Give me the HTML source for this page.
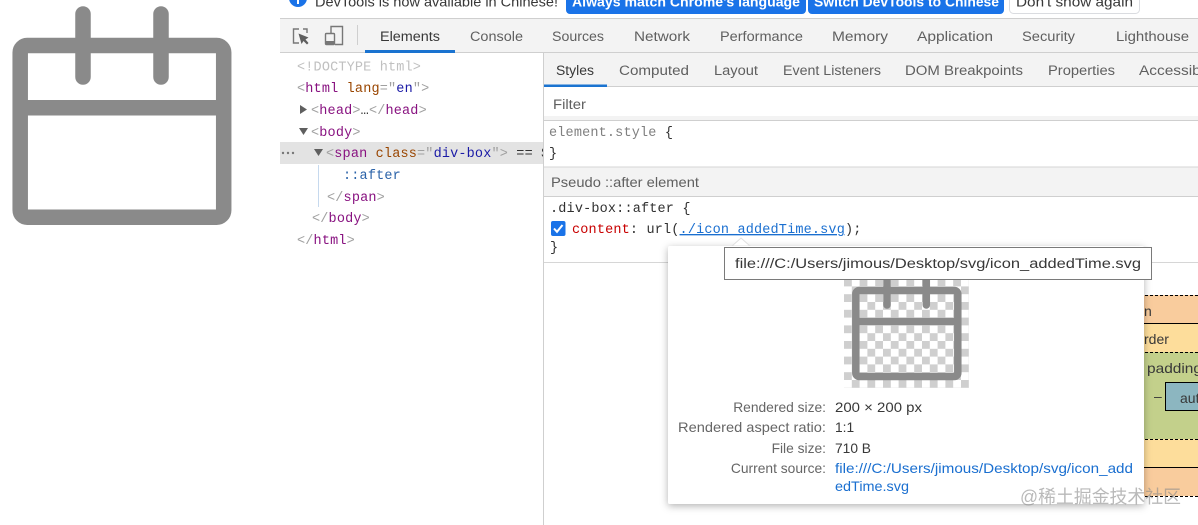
<!DOCTYPE html>
<html lang="en">
<head>
<meta charset="utf-8">
<title>DevTools</title>
<style>
html,body{margin:0;padding:0;background:#fff;width:1198px;height:525px;overflow:hidden}
svg{display:block;position:absolute;left:0;top:0}
text{font-family:"Liberation Sans",sans-serif;white-space:pre}
.t{font-size:14.2px;fill:#5f5f5f}
.u{font-size:14.2px;fill:#383838}
.m{font-family:"Liberation Mono",monospace;font-size:13.5px;letter-spacing:.17px;fill:#a3a3a3}
.g{fill:#a0a0a0}.n{fill:#881280}.a{fill:#994500}.v{fill:#1a1aa6}.d{fill:#303030}
.l{font-size:13.8px;fill:#666;text-anchor:end}
.r{font-size:13.8px;fill:#383838}
.b{font-size:13.8px;fill:#1a6fd0}
</style>
</head>
<body>
<svg width="1198" height="525" viewBox="0 0 1198 525" xmlns="http://www.w3.org/2000/svg">
<defs>
<pattern id="ch" x="844" y="263" width="15.6" height="15.6" patternUnits="userSpaceOnUse">
<rect width="15.6" height="15.6" fill="#fff"/>
<rect width="7.8" height="7.8" fill="#cfcfcf"/>
<rect x="7.8" y="7.8" width="7.8" height="7.8" fill="#cfcfcf"/>
</pattern>
<clipPath id="leftp"><rect x="280" y="53" width="263" height="200"/></clipPath>
<filter id="sh" x="-10%" y="-10%" width="120%" height="120%"><feDropShadow dx="0" dy="2" stdDeviation="4" flood-color="#000" flood-opacity=".3"/></filter>
</defs>

<!-- big left icon -->
<g fill="none" stroke="#8a8a8a" stroke-width="15.5">
<rect x="20.2" y="45.5" width="203.5" height="171.7" rx="7"/>
<path d="M20 107.7H224"/>
<path stroke-linecap="round" d="M83 14V77M161 14V77"/>
</g>

<!-- infobar -->
<circle cx="298" cy="-2" r="9" fill="#1a73e8"/>
<rect x="297" y="-1" width="2" height="5" fill="#fff"/>
<text x="315" y="6.5" class="u" textLength="243" lengthAdjust="spacingAndGlyphs">DevTools is now available in Chinese!</text>
<rect x="566" y="-6" width="240" height="20" rx="4" fill="#1a73e8"/>
<text x="572" y="6.5" style="font-size:14px;font-weight:700;fill:#fff" textLength="228" lengthAdjust="spacingAndGlyphs">Always match Chrome's language</text>
<rect x="808" y="-6" width="196" height="20" rx="4" fill="#1a73e8"/>
<text x="814" y="6.5" style="font-size:14px;font-weight:700;fill:#fff" textLength="185" lengthAdjust="spacingAndGlyphs">Switch DevTools to Chinese</text>
<rect x="1009.5" y="-6" width="130" height="19.5" rx="4" fill="#fff" stroke="#dadce0"/>
<text x="1016" y="6.5" class="u" textLength="117" lengthAdjust="spacingAndGlyphs">Don't show again</text>

<!-- main toolbar -->
<rect x="280" y="18" width="918" height="35" fill="#f3f3f3"/>
<rect x="280" y="18" width="918" height="1" fill="#cfcfcf"/>
<rect x="280" y="52" width="918" height="1" fill="#cfcfcf"/>
<g fill="none" stroke="#777" stroke-width="1.4">
<path d="M299 29H293.5V43H299M303 29H307V33"/>
</g>
<path d="M298.5 33.5L308.5 37.5L305.5 39.5L308.5 43L307 44.5L303.5 41L301.5 44Z" fill="#5f5f5f"/>
<g fill="none" stroke="#777" stroke-width="1.4">
<path d="M331 34V26.5H342.5V44.5H335"/>
<rect x="325.5" y="33.5" width="9" height="11" rx="1"/>
</g>
<rect x="325" y="41" width="10" height="3.5" fill="#777"/>
<rect x="357" y="25" width="1" height="20" fill="#cfcfcf"/>
<text x="380" y="41" class="u" textLength="60" lengthAdjust="spacingAndGlyphs">Elements</text>
<rect x="365" y="50" width="90" height="3" fill="#1a73d0"/>
<text x="470" y="41" class="t" textLength="53" lengthAdjust="spacingAndGlyphs">Console</text>
<text x="552" y="41" class="t" textLength="52" lengthAdjust="spacingAndGlyphs">Sources</text>
<text x="634" y="41" class="t" textLength="56" lengthAdjust="spacingAndGlyphs">Network</text>
<text x="720" y="41" class="t" textLength="83" lengthAdjust="spacingAndGlyphs">Performance</text>
<text x="832" y="41" class="t" textLength="56" lengthAdjust="spacingAndGlyphs">Memory</text>
<text x="917" y="41" class="t" textLength="76" lengthAdjust="spacingAndGlyphs">Application</text>
<text x="1022" y="41" class="t" textLength="53" lengthAdjust="spacingAndGlyphs">Security</text>
<text x="1116" y="41" class="t" textLength="73" lengthAdjust="spacingAndGlyphs">Lighthouse</text>

<!-- elements tree -->
<rect x="280" y="142" width="263" height="22" fill="#e3e3e3"/>
<g fill="#777"><circle cx="283" cy="153" r="1.2"/><circle cx="288" cy="153" r="1.2"/><circle cx="293" cy="153" r="1.2"/></g>
<rect x="318" y="165" width="1" height="42" fill="#c6d9ee"/>
<path d="M300 105L307 109.5L300 114Z" fill="#5f5f5f"/>
<path d="M299 128H308L303.5 135Z" fill="#5f5f5f"/>
<path d="M314 149H323L318.5 156Z" fill="#5f5f5f"/>
<text x="297" y="70.5" class="m" style="fill:#c0c0c0">&lt;!DOCTYPE html&gt;</text>
<text x="297" y="92" class="m"><tspan class="g">&lt;</tspan><tspan class="n">html</tspan> <tspan class="a">lang</tspan><tspan class="g">="</tspan><tspan class="v">en</tspan><tspan class="g">"&gt;</tspan></text>
<text x="311" y="114" class="m"><tspan class="g">&lt;</tspan><tspan class="n">head</tspan><tspan class="g">&gt;</tspan><tspan class="d">…</tspan><tspan class="g">&lt;/</tspan><tspan class="n">head</tspan><tspan class="g">&gt;</tspan></text>
<text x="311" y="136" class="m"><tspan class="g">&lt;</tspan><tspan class="n">body</tspan><tspan class="g">&gt;</tspan></text>
<text x="326" y="157" class="m" clip-path="url(#leftp)"><tspan class="g">&lt;</tspan><tspan class="n">span</tspan> <tspan class="a">class</tspan><tspan class="g">="</tspan><tspan class="v">div-box</tspan><tspan class="g">"&gt;</tspan> <tspan class="d">== $0</tspan></text>
<text x="343" y="179" class="m" style="fill:#2a62a8">::after</text>
<text x="327" y="201" class="m"><tspan class="g">&lt;/</tspan><tspan class="n">span</tspan><tspan class="g">&gt;</tspan></text>
<text x="312" y="222" class="m"><tspan class="g">&lt;/</tspan><tspan class="n">body</tspan><tspan class="g">&gt;</tspan></text>
<text x="297" y="244" class="m"><tspan class="g">&lt;/</tspan><tspan class="n">html</tspan><tspan class="g">&gt;</tspan></text>

<!-- divider -->
<rect x="543" y="53" width="1" height="472" fill="#cfcfcf"/>

<!-- sub tabs -->
<rect x="544" y="53" width="654" height="34" fill="#f3f3f3"/>
<rect x="544" y="86" width="654" height="1" fill="#cfcfcf"/>
<rect x="544" y="84.5" width="63" height="2.5" fill="#1a73d0"/>
<text x="556" y="75" class="u" textLength="38" lengthAdjust="spacingAndGlyphs">Styles</text>
<text x="619" y="75" class="t" textLength="70" lengthAdjust="spacingAndGlyphs">Computed</text>
<text x="714" y="75" class="t" textLength="44" lengthAdjust="spacingAndGlyphs">Layout</text>
<text x="783" y="75" class="t" textLength="98" lengthAdjust="spacingAndGlyphs">Event Listeners</text>
<text x="905" y="75" class="t" textLength="118" lengthAdjust="spacingAndGlyphs">DOM Breakpoints</text>
<text x="1048" y="75" class="t" textLength="67" lengthAdjust="spacingAndGlyphs">Properties</text>
<text x="1139" y="75" class="t" textLength="84" lengthAdjust="spacingAndGlyphs">Accessibility</text>

<!-- filter -->
<rect x="544" y="116" width="654" height="4" fill="#f3f3f3"/>
<rect x="544" y="120" width="654" height="1" fill="#cfcfcf"/>
<text x="553" y="109" class="t" textLength="33" lengthAdjust="spacingAndGlyphs">Filter</text>

<!-- styles -->
<text x="549" y="136" class="m" style="fill:#808080">element.style <tspan class="d">{</tspan></text>
<text x="549" y="157" class="m d">}</text>
<rect x="544" y="167" width="654" height="29" fill="#f3f3f3"/>
<rect x="544" y="166.5" width="654" height="1" fill="#d6d6d6"/>
<rect x="544" y="196" width="654" height="1" fill="#cfcfcf"/>
<text x="551" y="187" class="t" style="font-size:14px" textLength="148" lengthAdjust="spacingAndGlyphs">Pseudo ::after element</text>
<text x="550" y="212" class="m d">.div-box::after {</text>
<rect x="551" y="221" width="14.5" height="15" rx="2" fill="#1a73e8"/>
<path d="M554 228.5L557 231.8L562.5 225" fill="none" stroke="#fff" stroke-width="2"/>
<text x="572" y="233" class="m d"><tspan style="fill:#c80000">content</tspan>: url(<tspan style="fill:#1a6fd0;text-decoration:underline">./icon_addedTime.svg</tspan>);</text>
<text x="550" y="251" class="m d">}</text>
<rect x="544" y="262" width="654" height="1" fill="#d6d6d6"/>

<!-- box model -->
<rect x="1130" y="295" width="68" height="28" fill="#f9cc9d"/>
<rect x="1130" y="323" width="68" height="29" fill="#fddd9b"/>
<rect x="1130" y="352" width="68" height="87" fill="#c3d08b"/>
<rect x="1130" y="439" width="68" height="28" fill="#fddd9b"/>
<rect x="1130" y="467" width="68" height="29" fill="#f9cc9d"/>
<g stroke="#000" fill="none">
<path d="M1130 295.5H1198M1130 352.5H1198M1130 439.5H1198M1130 496.5H1198" stroke-dasharray="3 2"/>
<path d="M1130 323.5H1198M1130 467.5H1198"/>
</g>
<rect x="1165.5" y="382.5" width="40" height="28" fill="#8cb6c0" stroke="#000"/>
<text x="1144" y="316" class="u" style="font-size:14px">n</text>
<text x="1144" y="344" class="u" style="font-size:14px">rder</text>
<text x="1147" y="373" class="u" style="font-size:14px" textLength="55" lengthAdjust="spacingAndGlyphs">padding</text>
<text x="1154" y="401" class="u" style="font-size:14px">–</text>
<text x="1180" y="403" class="u" style="font-size:14px">auto</text>

<!-- popover -->
<rect x="668" y="246" width="476" height="258" rx="2" fill="#fff" filter="url(#sh)"/>
<path d="M732 246L741 238L750 246Z" fill="#fff" stroke="#e0e0e0"/>
<rect x="730" y="246" width="22" height="2" fill="#fff"/>
<rect x="844" y="263" width="125" height="125" fill="url(#ch)"/>
<g fill="none" stroke="#8a8a8a" stroke-width="7.5">
<rect x="855.8" y="290.5" width="102" height="86" rx="3.5"/>
<path d="M856 321.5H958"/>
<path stroke-linecap="round" d="M887 270V305M926.3 270V305"/>
</g>
<text x="826" y="412" class="l">Rendered size:</text>
<text x="826" y="432" class="l" textLength="148" lengthAdjust="spacingAndGlyphs">Rendered aspect ratio:</text>
<text x="826" y="453" class="l">File size:</text>
<text x="826" y="473" class="l">Current source:</text>
<text x="835" y="412" class="r" textLength="87" lengthAdjust="spacingAndGlyphs">200 × 200 px</text>
<text x="835" y="432" class="r">1:1</text>
<text x="835" y="453" class="r" textLength="36" lengthAdjust="spacingAndGlyphs">710 B</text>
<text x="835" y="473" class="b" textLength="298" lengthAdjust="spacingAndGlyphs">file:///C:/Users/jimous/Desktop/svg/icon_add</text>
<text x="835" y="491" class="b" textLength="74" lengthAdjust="spacingAndGlyphs">edTime.svg</text>

<!-- tooltip -->
<rect x="724.5" y="247.5" width="427" height="32" fill="#fff" stroke="#7a7a7a"/>
<text x="735" y="268" class="u" textLength="406" lengthAdjust="spacingAndGlyphs">file:///C:/Users/jimous/Desktop/svg/icon_addedTime.svg</text>

<!-- watermark -->
<text x="1020" y="503" style="font-family:'Liberation Sans','Noto Sans CJK SC',sans-serif;font-size:18px;fill:#8a8a8a;fill-opacity:.6" textLength="161" lengthAdjust="spacingAndGlyphs">@稀土掘金技术社区</text>
</svg>
</body>
</html>
